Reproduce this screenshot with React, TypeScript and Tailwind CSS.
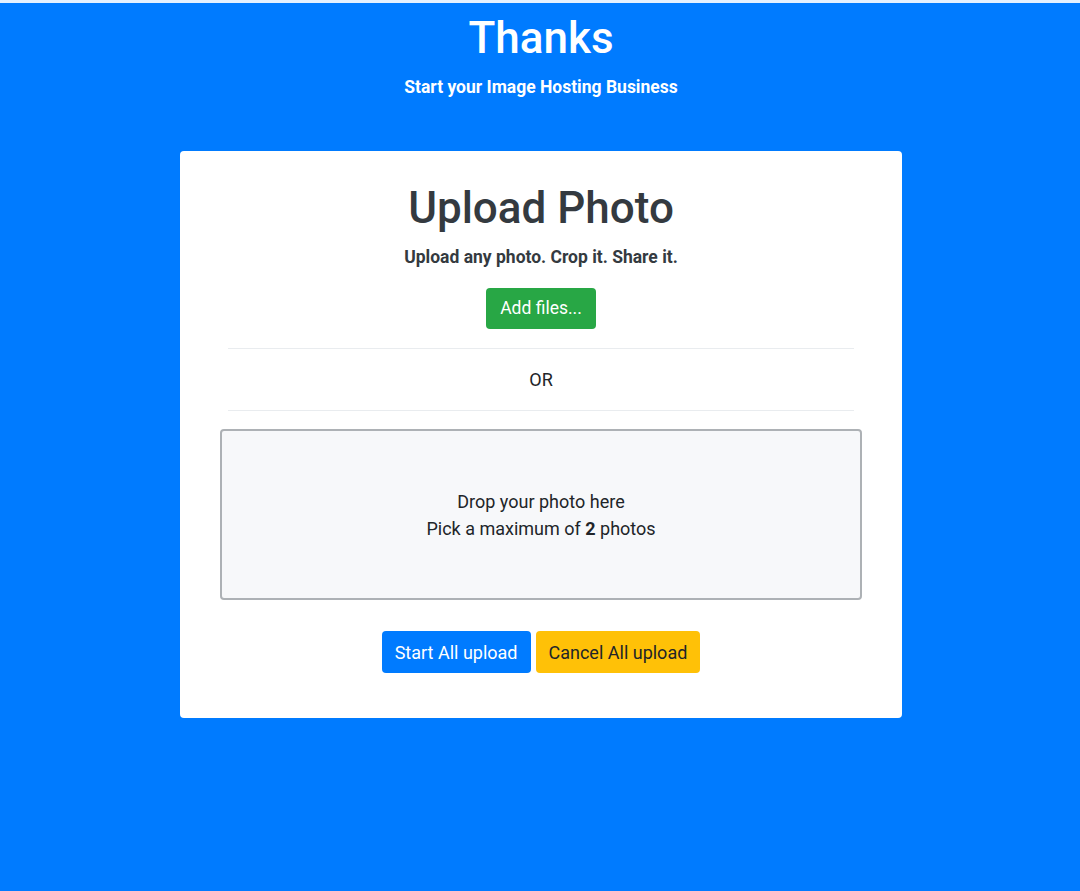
import React from "react";

export default function App() {
  return (
    <div
      className="min-h-[891px] w-full bg-[#007bff] border-t-[3px] border-[#e4f1ff] pl-[2px]"
      style={{ fontFamily: "Roboto, 'Noto Sans', Arial, sans-serif" }}
    >
      <header className="flex flex-col items-center text-white">
        <h1 className="mt-[9px] text-[44px] leading-[52px] font-medium">Thanks</h1>
        <p className="mt-[11px] text-[17.5px] leading-[24px] font-bold">Start your Image Hosting Business</p>
      </header>

      <div className="mx-auto mt-[52px] w-[722px] rounded-[4px] bg-white pt-[33px] pb-[45px] flex flex-col items-center text-[#212529]">
        <h2 className="text-[44px] leading-[48px] font-medium text-[#343a40]">Upload Photo</h2>
        <p className="mt-[12px] text-[17.5px] leading-[26px] font-bold text-[#343a40]">
          Upload any photo. Crop it. Share it.
        </p>
        <button className="mt-[18px] h-[41px] px-[14px] rounded-[4px] bg-[#28a745] text-white text-[17.5px] leading-[27px]">
          Add files...
        </button>
        <div className="mt-[19px] w-[626px] border-t border-[#e9ecef]" />
        <div className="h-[61px] flex items-center justify-center text-[18px] text-[#212529]">OR</div>
        <div className="w-[626px] border-t border-[#e9ecef]" />
        <div className="mt-[18px] w-[642px] h-[171px] rounded-[4px] border-2 border-[#adb1b5] bg-[#f7f8fa] flex flex-col items-center justify-center text-[18px] leading-[27px] text-[#212529]">
          <div>Drop your photo here</div>
          <div>
            Pick a maximum of <b className="font-bold">2</b> photos
          </div>
        </div>
        <div className="mt-[31px] flex gap-[5px]">
          <button className="h-[42px] px-[13px] rounded-[4px] bg-[#007bff] text-white text-[18px] leading-[27px]">
            Start All upload
          </button>
          <button className="h-[42px] px-[13px] rounded-[4px] bg-[#ffc107] text-[#212529] text-[18px] leading-[27px]">
            Cancel All upload
          </button>
        </div>
      </div>
    </div>
  );
}
